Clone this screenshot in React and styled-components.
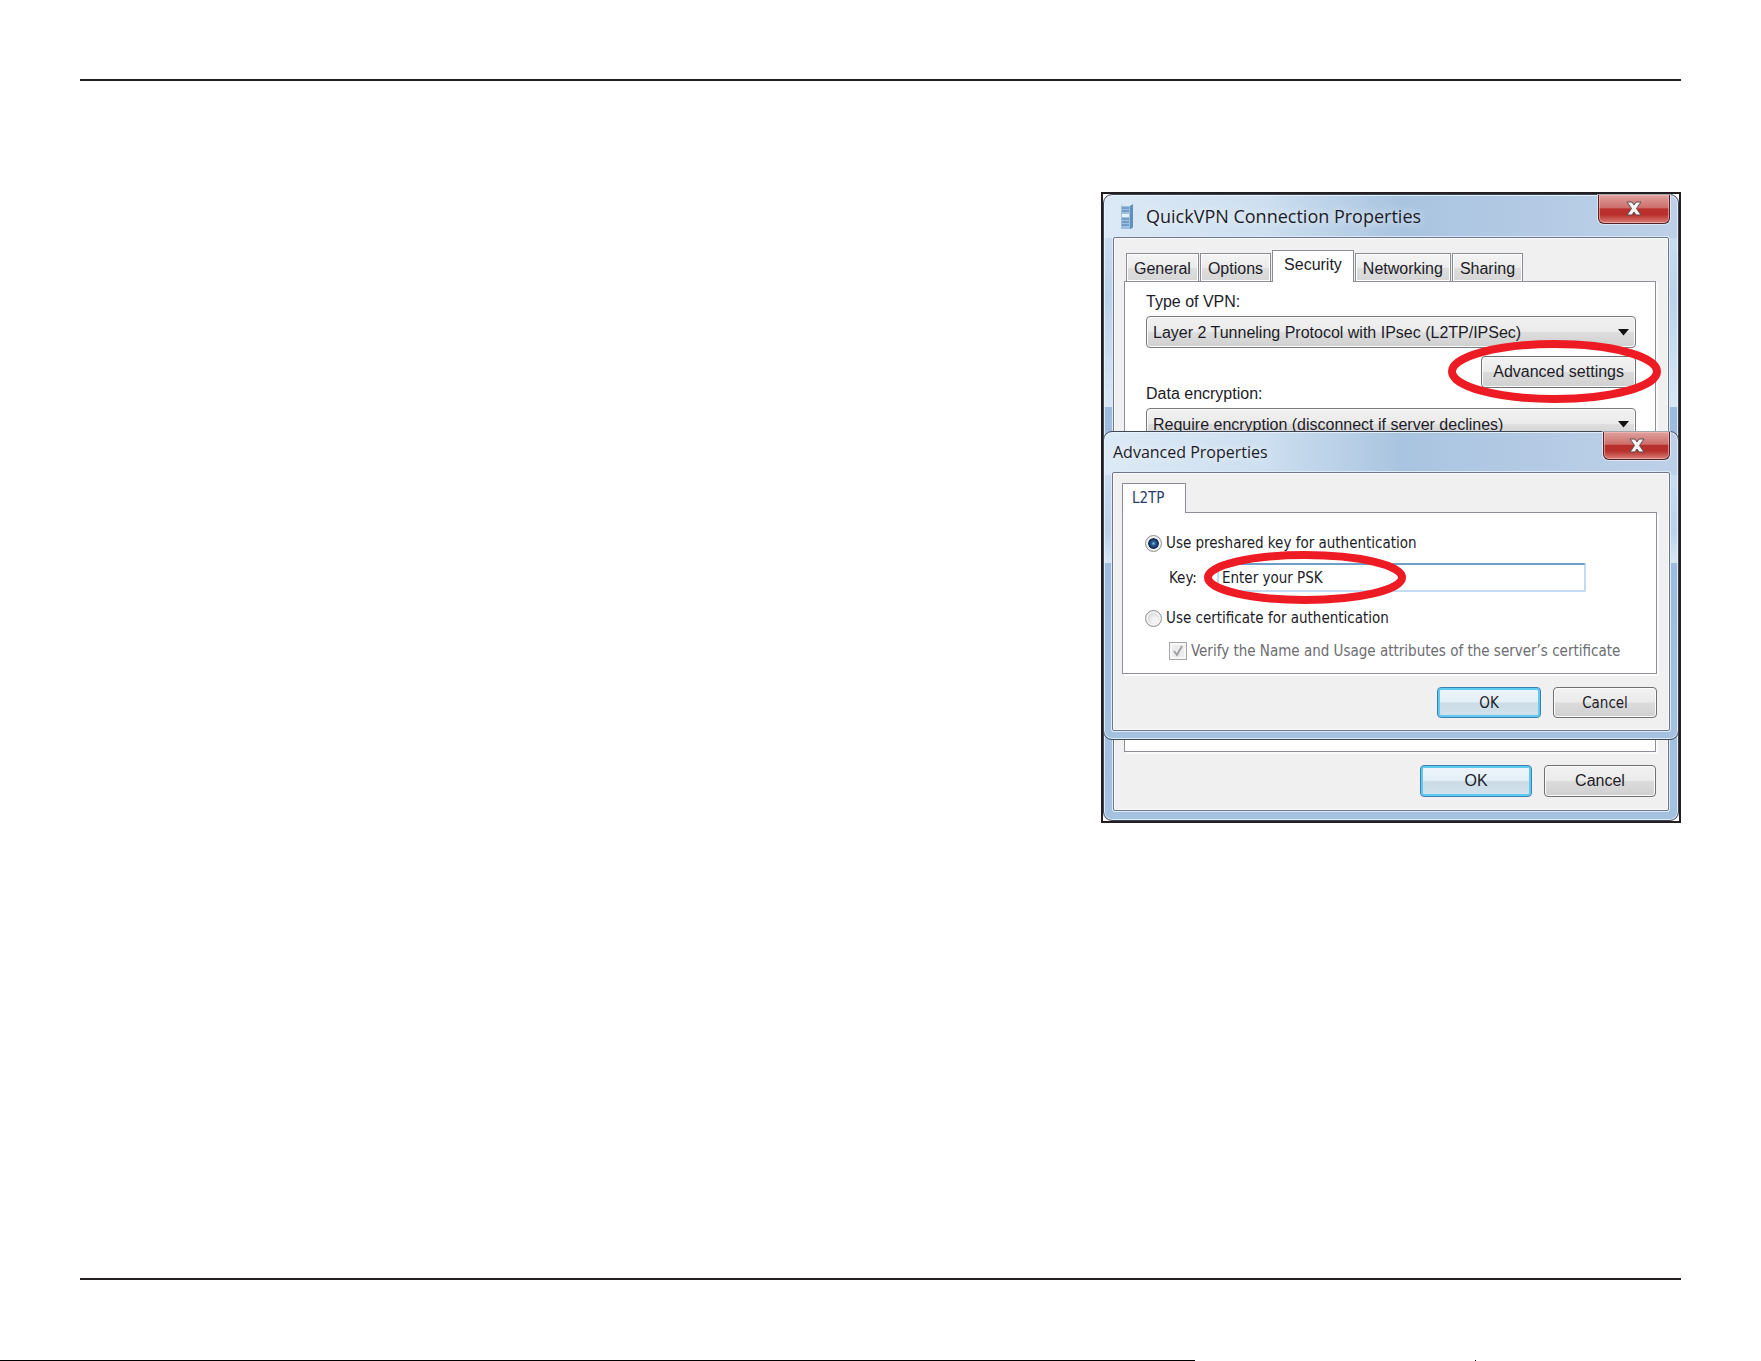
import React, { useState } from 'react'
import styled, { createGlobalStyle } from 'styled-components'


const GlobalStyle = createGlobalStyle`
    * {
        box-sizing: border-box;
    }

    body {
        margin: 0;
        background-color: #fff;
    }

    button, input, select {
        font: inherit;
        color: inherit;
        margin: 0;
    }
`

const Page = styled.div`
    display: flex;
    flex-direction: column;
    min-height: 100vh;
    font-family: "Liberation Sans", Arial, sans-serif;
    font-size: 16px;
    line-height: 20px;
    color: #1c1c28;
`

const Rule = styled.hr`
    height: 2px;
    border: 0;
    margin: ${props => props.$bottom ? '0 80px 80px' : '79px 80px 0'};
    background-color: #231f20;
`

const Main = styled.main`
    flex: 1;
    display: flex;
    justify-content: flex-end;
    align-items: flex-start;
    padding: 111px 80px 40px;
`

const PageEdge = styled.div`
    display: grid;
    grid-template-columns: 1195fr 280fr 1px 285fr;
    height: 1px;
`

const EdgeLine = styled.div`
    background-color: #000;
`

const EdgeDot = styled.div`
    grid-column: 3;
    background-color: #000;
`

const Frame = styled.figure`
    position: relative;
    width: 580px;
    max-width: 100%;
    margin: 0;
    border: 2px solid #231f20;
`

const Window = styled.section`
    display: flex;
    flex-direction: column;
    border: 1px solid #3f4654;
    border-radius: 9px;
    box-shadow: inset 0 0 0 1px rgba(235, 245, 255, 0.8);
    background:
        linear-gradient(90deg, #dce9f6 0%, #cddff0 28%, #a9c4e0 52%, #b4cae4 75%, #bdd0e8 100%) 0 0 / 100% 43px no-repeat,
        linear-gradient(180deg, #d4e4f4 0, #bcd2ea 100px, #d8e7f5 ${props => props.$shine}px, #9dbbdc ${props => props.$shine}px, #a5c1e0 100%);
`

const Dialog = styled(Window)`
    position: absolute;
    top: 237px;
    left: 0;
    right: 0;
    font-family: "DejaVu Sans Condensed", "Open Sans", sans-serif;
    font-size: 15px;
`

const TitleBar = styled.header`
    display: flex;
    align-items: center;
    height: ${props => props.$small ? 40 : 42}px;
    padding: ${props => props.$small ? '0 8px 0 9px' : '0 8px 0 17px'};
    gap: 13px;
`

const Title = styled.h2`
    flex: 1;
    margin: 0;
    font-family: "Open Sans", "Noto Sans", sans-serif;
    font-size: ${props => props.$small ? 16 : 18}px;
    font-weight: 400;
    line-height: 24px;
    text-shadow: 0 0 8px #fff;
`

const CloseButton = styled.button`
    align-self: flex-start;
    display: flex;
    align-items: center;
    justify-content: center;
    width: ${props => props.$small ? 67 : 72}px;
    height: ${props => props.$small ? 28 : 29}px;
    padding: 0;
    border: 1px solid #50232b;
    border-top: 0;
    border-radius: 0 0 6px 6px;
    box-shadow: inset 0 0 0 1px rgba(255, 190, 185, 0.6), 0 0 0 1px rgba(255, 255, 255, 0.5);
    background: linear-gradient(180deg, #dda19e 0%, #cf6e6a 45%, #b8302d 50%, #b92f2c 70%, #d97f78 100%);
`

const Client = styled.div`
    margin: ${props => props.$small ? '0 8px 8px' : '0 9px 9px'};
    padding: ${props => props.$small ? '10px 12px 12px 9px' : '12px 12px 13px 10px'};
    border: 1px solid #6e7689;
    border-radius: 2px;
    box-shadow: 0 0 0 1px #dcebf8, inset 0 0 0 1px #fafafa;
    background-color: #f0f0f1;
`

const TabList = styled.div`
    display: flex;
    align-items: flex-end;
    gap: 1px;
    padding-left: ${props => props.$small ? 0 : 2}px;
`

const Tab = styled.button`
    position: relative;
    height: ${props => props.$active ? 32 : 28}px;
    margin-bottom: ${props => props.$active ? -1 : 0}px;
    padding: ${props => props.$active ? '0 11px 4px' : '2px 7px 0'};
    border: 1px solid #898c95;
    border-bottom: 0;
    box-shadow: inset 0 0 0 1px #fff;
    background: ${props => props.$active ? '#fff' : 'linear-gradient(180deg, #f4f4f4 0%, #ececec 50%, #dedede 52%, #d6d6d6 100%)'};
`

const SmallTab = styled(Tab)`
    height: 30px;
    padding: 0 21px 2px 9px;
    color: #2b3a68;
`

const Panel = styled.div`
    min-height: ${props => props.$small ? 162 : 471}px;
    padding: ${props => props.$small ? '20px 28px 12px 22px' : '10px 19px 20px 21px'};
    border: 1px solid #8e9099;
    box-shadow: 2px 2px 0 #fbfbfb;
    background-color: #fff;
`

const FieldLabel = styled.label`
    display: block;
`

const SelectWrap = styled.div`
    position: relative;
    margin-top: 4px;
`

const Select = styled.select`
    appearance: none;
    display: block;
    width: 100%;
    height: 32px;
    padding: 1px 32px 0 6px;
    border: 1px solid #7b7b7b;
    border-radius: 4px;
    box-shadow: inset 0 0 0 1px #fafafa;
    background: linear-gradient(180deg, #f1f1f1 0%, #ebebeb 48%, #dddddd 52%, #d0d0d0 100%);
`

const SelectArrow = styled.svg`
    position: absolute;
    top: 13px;
    right: 7px;
    pointer-events: none;
`

const AdvancedRow = styled.div`
    display: flex;
    justify-content: space-between;
    height: 48px;
    margin-top: 8px;

    label {
        align-self: flex-end;
    }
`

const Button = styled.button`
    position: relative;
    min-width: ${props => props.$small ? 104 : 112}px;
    height: ${props => props.$small ? 31 : 32}px;
    padding: 0 11px;
    border: 1px solid ${props => props.$primary ? '#3c7fb1' : '#707070'};
    border-radius: 4px;
    box-shadow: inset 0 0 0 ${props => props.$primary ? '2px #5fcaf0' : '1px #fbfbfb'};
    background: ${props => props.$primary
        ? 'linear-gradient(180deg, #eef5fa 0%, #e4eff7 48%, #cbdce8 52%, #d3e2ec 100%)'
        : 'linear-gradient(180deg, #f2f2f2 0%, #ebebeb 48%, #dbdbdb 52%, #d0d0d0 100%)'};
`

const AdvancedWrap = styled.div`
    position: relative;
    height: 32px;
`

const Footer = styled.footer`
    display: flex;
    justify-content: flex-end;
    gap: 12px;
    margin-top: 13px;
`

const ChoiceLabel = styled.label`
    display: flex;
    align-items: center;
    gap: 4px;
    height: 20px;
    margin-left: ${props => props.$sub ? 24 : 0}px;
    margin-top: ${props => props.$sub ? 13 : 0}px;
    color: ${props => props.$sub ? '#6d6d72' : 'inherit'};
    white-space: nowrap;
`

const Radio = styled.input`
    appearance: none;
    width: 17px;
    height: 17px;
    border: 1px solid #8e8f8f;
    border-radius: 50%;
    box-shadow: inset 0 0 0 2px #f2f2f2;
    background: radial-gradient(circle at 60% 60%, #f4f4f4 20%, #cfd0d2 70%);

    &:checked {
        background: radial-gradient(circle at 50% 50%, #7cc4ec 0, #2a5f96 2px, #14284e 5px, #d8dce0 6px);
    }
`

const CheckboxBox = styled.span`
    display: grid;

    > * {
        grid-area: 1 / 1;
    }
`

const Checkbox = styled.input`
    appearance: none;
    width: 18px;
    height: 18px;
    border: 1px solid #a5a5a5;
    box-shadow: inset 0 0 0 2px #f7f7f7;
    background-color: #ececec;
`

const KeyRow = styled.div`
    display: flex;
    align-items: center;
    height: 29px;
    margin: 10px 42px 16px 24px;

    label {
        width: 48px;
    }
`

const KeyField = styled.div`
    position: relative;
    flex: 1;
`

const KeyInput = styled.input`
    display: block;
    width: 100%;
    height: 29px;
    padding: 0 3px;
    border: 2px solid #c4dcf1;
    border-top-color: #6c9fca;
    border-radius: 2px;
    background-color: #fff;
`

const Highlight = styled.svg`
    position: absolute;
    z-index: 1;
    top: ${props => props.$key ? -12 : -16}px;
    ${props => props.$key ? 'left: -13px' : 'right: -25px'};
    pointer-events: none;
`


const ServerIcon = () => (
    <svg width="12" height="25" viewBox="0 0 12 25" aria-hidden="true">
        <path d="M0 2 2 0h10v23l-2 2H0z" fill="#5f8fbd" />
        <path d="M0 2h9v23H0z" fill="#9dc0de" />
        <path d="M2 0h10L9 2H0z" fill="#d9e8f4" />
        <path d="M1 4h7M1 7h7M1 15h7M1 18h7M1 21h7" stroke="#4c78a6" />
        <path d="M1 10h7v3H1z" fill="#e6f2fb" />
    </svg>
)

const CloseGlyph = () => (
    <svg width="18" height="16" viewBox="0 0 18 16" aria-hidden="true">
        <path
            d="M2 1h5l2 3 2-3h5l-4.500 6.500L16 14h-5l-2-3-2 3H2l4.500-6.500z"
            fill="#f5f3f3"
            stroke="#5d4a50"
            strokeLinejoin="round"
        />
    </svg>
)

const Ellipse = ({ width, height, forKey }) => (
    <Highlight width={width} height={height} $key={forKey} aria-hidden="true">
        <ellipse
            cx={width / 2}
            cy={height / 2}
            rx={width / 2 - 4}
            ry={height / 2 - 4}
            fill="none"
            stroke="#ed1c24"
            strokeWidth="8"
        />
    </Highlight>
)

const Dropdown = ({ id, options }) => (
    <SelectWrap>
        <Select id={id}>
            {options.map(option => <option key={option}>{option}</option>)}
        </Select>
        <SelectArrow width="11" height="7" aria-hidden="true">
            <path d="M0 0h11L5.500 6.500z" fill="#111" />
        </SelectArrow>
    </SelectWrap>
)

const AdvancedProperties = () => {

    const [method, setMethod] = useState('psk');
    const [psk, setPsk] = useState('Enter your PSK');

    return (
        <Dialog $shine={131} aria-labelledby="advanced-title">
            <TitleBar $small>
                <Title $small id="advanced-title">Advanced Properties</Title>
                <CloseButton $small aria-label="Close"><CloseGlyph /></CloseButton>
            </TitleBar>
            <Client $small>
                <TabList $small role="tablist">
                    <SmallTab $active role="tab" aria-selected="true">L2TP</SmallTab>
                </TabList>
                <Panel $small>
                    <ChoiceLabel>
                        <Radio type="radio" name="method" checked={method === 'psk'} onChange={() => setMethod('psk')} />
                        Use preshared key for authentication
                    </ChoiceLabel>
                    <KeyRow>
                        <label htmlFor="psk">Key:</label>
                        <KeyField>
                            <KeyInput id="psk" value={psk} onChange={e => setPsk(e.target.value)} />
                            <Ellipse width={202} height={53} forKey />
                        </KeyField>
                    </KeyRow>
                    <ChoiceLabel>
                        <Radio type="radio" name="method" checked={method === 'cert'} onChange={() => setMethod('cert')} />
                        Use certificate for authentication
                    </ChoiceLabel>
                    <ChoiceLabel $sub>
                        <CheckboxBox>
                            <Checkbox type="checkbox" defaultChecked disabled />
                            <svg width="18" height="18" aria-hidden="true">
                                <path d="M5 9l3 4 5-9" fill="none" stroke="#a0a0a6" strokeWidth="2" />
                            </svg>
                        </CheckboxBox>
                        Verify the Name and Usage attributes of the server’s certificate
                    </ChoiceLabel>
                </Panel>
                <Footer>
                    <Button $small $primary>OK</Button>
                    <Button $small>Cancel</Button>
                </Footer>
            </Client>
        </Dialog>
    )
}

const TABS = ['General', 'Options', 'Security', 'Networking', 'Sharing'];

const App = () => {

    const [tab, setTab] = useState('Security');

    return (
        <Page>
            <GlobalStyle />
            <Rule />
            <Main>
                <Frame>
                    <Window $shine={212} aria-labelledby="vpn-title">
                        <TitleBar>
                            <ServerIcon />
                            <Title id="vpn-title">QuickVPN Connection Properties</Title>
                            <CloseButton aria-label="Close"><CloseGlyph /></CloseButton>
                        </TitleBar>
                        <Client>
                            <TabList role="tablist">
                                {TABS.map(name => (
                                    <Tab
                                        key={name}
                                        role="tab"
                                        aria-selected={name === tab}
                                        $active={name === tab}
                                        onClick={() => setTab(name)}
                                    >
                                        {name}
                                    </Tab>
                                ))}
                            </TabList>
                            <Panel>
                                <FieldLabel htmlFor="vpn-type">Type of VPN:</FieldLabel>
                                <Dropdown id="vpn-type" options={['Layer 2 Tunneling Protocol with IPsec (L2TP/IPSec)']} />
                                <AdvancedRow>
                                    <FieldLabel htmlFor="encryption">Data encryption:</FieldLabel>
                                    <AdvancedWrap>
                                        <Button>Advanced settings</Button>
                                        <Ellipse width={213} height={63} />
                                    </AdvancedWrap>
                                </AdvancedRow>
                                <Dropdown id="encryption" options={['Require encryption (disconnect if server declines)']} />
                            </Panel>
                            <Footer>
                                <Button $primary>OK</Button>
                                <Button>Cancel</Button>
                            </Footer>
                        </Client>
                    </Window>
                    <AdvancedProperties />
                </Frame>
            </Main>
            <Rule $bottom />
            <PageEdge>
                <EdgeLine />
                <EdgeDot />
            </PageEdge>
        </Page>
    )
}

export default App
